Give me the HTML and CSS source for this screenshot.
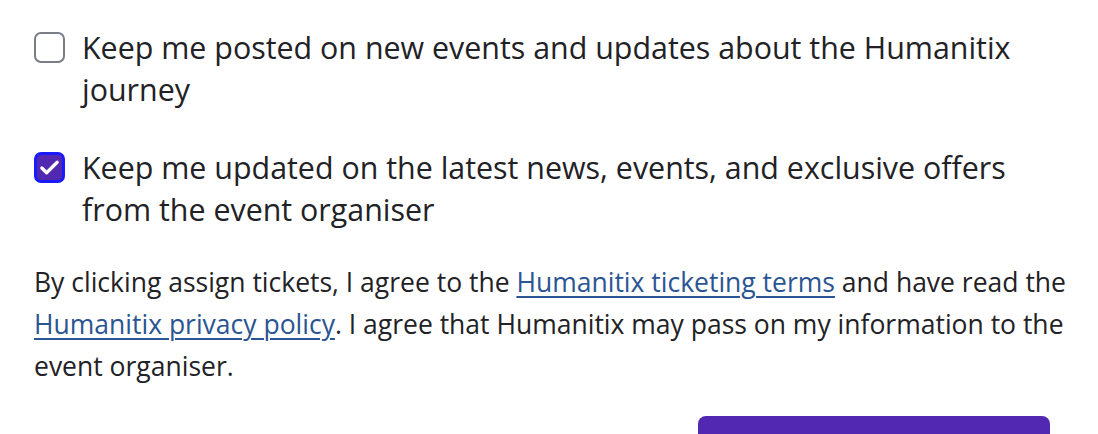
FILE: index.html
```html
<!DOCTYPE html>
<html>
<head>
<meta charset="utf-8">
<link rel="stylesheet" href="styles.css">
</head>
<body>
<div class="wrap">
  <label class="opt">
    <span class="box"></span>
    <span class="txt">Keep me posted on new events and updates about the Humanitix journey</span>
  </label>
  <label class="opt">
    <span class="box checked"><svg viewBox="0 0 24 24" width="23" height="23"><path d="M4 12.5l5 5L20 6.5" fill="none" stroke="#fff" stroke-width="3.4" stroke-linecap="round" stroke-linejoin="round"/></svg></span>
    <span class="txt">Keep me updated on the latest news, events, and exclusive offers from the event organiser</span>
  </label>
  <p class="terms">By clicking assign tickets, I agree to the <a href="#">Humanitix ticketing terms</a> and have read the <a href="#">Humanitix privacy policy</a>. I agree that Humanitix may pass on my information to the event organiser.</p>
  <div class="actions"><button class="btn"></button></div>
</div>
</body>
</html>
```
FILE: styles.css
```css
html, body { margin: 0; padding: 0; background: #fff; }
body { font-family: "Open Sans", sans-serif; color: #222226; }
.wrap { height: 434px; overflow: hidden; box-sizing: border-box; padding: 27px 24px 0 34px; }
.opt { display: flex; gap: 17px; align-items: flex-start; margin-bottom: 36px; padding-right: 30px; }
.box { flex: none; width: 31px; height: 31px; box-sizing: border-box; border: 2px solid #7a7d88; border-radius: 7px; margin-top: 5px; display: flex; align-items: center; justify-content: center; }
.box.checked { border: 3px solid #1a1aff; background: #5227b2; }
.txt { font-size: 30.4px; line-height: 42px; }
.terms { margin: -6px 0 0 0; font-size: 26.5px; line-height: 42px; }
.terms a { color: #2b5592; text-decoration: underline; text-underline-offset: 4px; text-decoration-thickness: 1.5px; }
.actions { display: flex; justify-content: flex-end; padding-top: 29px; padding-right: 24px; }
.btn { width: 352px; height: 60px; border: none; border-radius: 8px; background: #5227b2; }
```
